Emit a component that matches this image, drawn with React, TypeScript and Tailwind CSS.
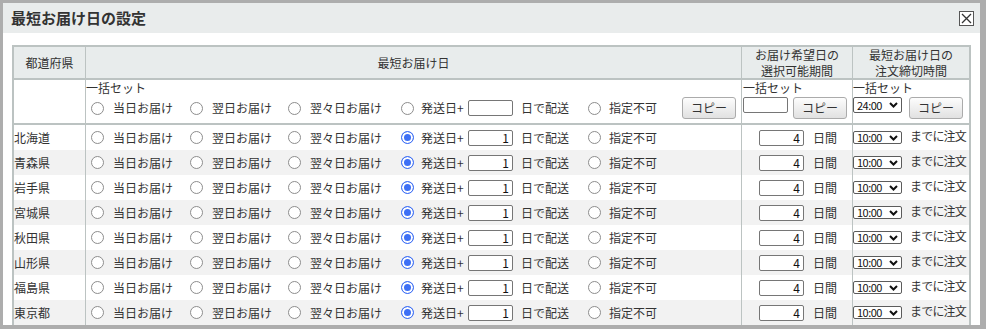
import React from "react";

const prefs = ["北海道", "青森県", "岩手県", "宮城県", "秋田県", "山形県", "福島県", "東京都"];

function Radio({ checked = false }: { checked?: boolean }) {
  return (
    <span
      className={`inline-block h-[13px] w-[13px] shrink-0 rounded-full border ${
        checked
          ? "border-[#3d6ff5] bg-[#3d6ff5] shadow-[inset_0_0_0_2px_white]"
          : "border-[#8d8d8d] bg-white"
      }`}
    />
  );
}

function TextBox({ value = "", className = "" }: { value?: string; className?: string }) {
  return (
    <input
      readOnly
      value={value}
      className={`h-[16px] w-[45px] shrink-0 rounded-[2px] border border-[#767676] bg-white px-[3px] text-right text-[12px] leading-[14px] text-[#111] outline-none ${className}`}
    />
  );
}

function FakeSelect({ value, tall = false }: { value: string; tall?: boolean }) {
  return (
    <div
      className={`flex w-[49px] shrink-0 items-center justify-between rounded-[2px] border border-[#5c5c5c] bg-white pl-[3px] pr-[3px] text-[11px] leading-none text-[#111] ${
        tall ? "h-[16px]" : "h-[13px]"
      }`}
    >
      <span className="tracking-[-0.5px]">{value}</span>
      <svg width="9" height="6" viewBox="0 0 9 6">
        <path d="M1 1 L4.5 4.5 L8 1" fill="none" stroke="#111" strokeWidth="2" />
      </svg>
    </div>
  );
}

function CopyButton() {
  return (
    <button className="h-[22px] w-[54px] shrink-0 rounded-[3px] border border-[#ababab] bg-linear-to-b from-[#fdfdfd] to-[#e1e1e1] text-[12px] leading-none text-[#333]">
      コピー
    </button>
  );
}

function Options({ bulk = false }: { bulk?: boolean }) {
  return (
    <div className={`flex pl-[5px] ${bulk ? "h-[22px] items-center" : "h-full items-center"}`}>
      <div className="flex w-[99px] items-center">
        <Radio />
        <span className="ml-[9px]">当日お届け</span>
      </div>
      <div className="flex w-[98px] items-center">
        <Radio />
        <span className="ml-[9px]">翌日お届け</span>
      </div>
      <div className="flex w-[113px] items-center">
        <Radio />
        <span className="ml-[9px]">翌々日お届け</span>
      </div>
      <div className="flex w-[187px] items-center">
        <Radio checked={!bulk} />
        <span className="ml-[7px] w-[47px]">発送日+</span>
        <TextBox value={bulk ? "" : "1"} />
        <span className="ml-[8px]">日で配送</span>
      </div>
      <div className="flex w-[94px] items-center">
        <Radio />
        <span className="ml-[8px]">指定不可</span>
      </div>
      {bulk && <CopyButton />}
    </div>
  );
}

export default function App() {
  return (
    <div
      className="h-[329px] w-[986px] overflow-hidden bg-[#adadad] pl-[3px] pt-[3px] text-[12px] text-[#333]"
      style={{ fontFamily: '"Noto Sans CJK JP", "Noto Sans", sans-serif' }}
    >
      <div className="h-[322px] w-[977px] overflow-hidden bg-white">
        <div className="flex h-[30px] items-center justify-between bg-[#e9ecec] pl-[8px] pr-[6px]">
          <span className="text-[15px] font-bold text-[#333]">最短お届け日の設定</span>
          <div className="flex h-[15px] w-[15px] items-center justify-center border border-[#555] bg-white">
            <svg width="11" height="11" viewBox="0 0 11 11">
              <path d="M1 1 L10 10 M10 1 L1 10" stroke="#333" strokeWidth="1.3" />
            </svg>
          </div>
        </div>

        <div className="ml-[9px] mt-[12px] w-[959px] border-2 border-[#bcc3c2]">
          {/* header */}
          <div className="flex h-[33px] border-b-2 border-[#bcc3c2] bg-[#e8ecec] leading-[16px]">
            <div className="flex w-[72px] items-center justify-center border-r border-[#bcc3c2]">都道府県</div>
            <div className="flex w-[656px] items-center justify-center border-r border-[#bcc3c2]">最短お届け日</div>
            <div className="flex w-[111px] flex-col items-center justify-center border-r border-[#bcc3c2]">
              <span>お届け希望日の</span>
              <span>選択可能期間</span>
            </div>
            <div className="flex w-[116px] flex-col items-center justify-center">
              <span>最短お届け日の</span>
              <span>注文締切時間</span>
            </div>
          </div>

          {/* bulk row */}
          <div className="flex h-[45px] border-b-2 border-[#bcc3c2] leading-[14px]">
            <div className="w-[72px] border-r border-[#bcc3c2]" />
            <div className="w-[656px] border-r border-[#bcc3c2]">
              <div className="h-[16px] leading-[16px]">一括セット</div>
              <div className="mt-[1px]">
                <Options bulk />
              </div>
            </div>
            <div className="w-[111px] border-r border-[#bcc3c2] pl-[1px]">
              <div className="h-[16px] leading-[16px]">一括セット</div>
              <div className="mt-[1px] flex items-start">
                <TextBox />
                <div className="ml-[5px]">
                  <CopyButton />
                </div>
              </div>
            </div>
            <div className="w-[116px]">
              <div className="h-[16px] leading-[16px]">一括セット</div>
              <div className="mt-[1px] flex items-start">
                <FakeSelect value="24:00" tall />
                <div className="ml-[7px]">
                  <CopyButton />
                </div>
              </div>
            </div>
          </div>

          {/* data rows */}
          {prefs.map((p, i) => (
            <div
              key={p}
              className={`flex h-[25px] leading-[14px] ${i % 2 === 1 ? "bg-[#f2f2f2]" : "bg-white"}`}
            >
              <div className="flex w-[72px] items-center border-r border-[#bcc3c2]">{p}</div>
              <div className="w-[656px] border-r border-[#bcc3c2]">
                <Options />
              </div>
              <div className="flex w-[111px] items-center border-r border-[#bcc3c2] pl-[17px]">
                <TextBox value="4" />
                <span className="ml-[9px]">日間</span>
              </div>
              <div className="flex w-[116px] items-center">
                <FakeSelect value="10:00" />
                <span className="ml-[8px] mt-[4px] shrink-0 self-start whitespace-nowrap tracking-[-0.8px]">
                  までに注文
                </span>
              </div>
            </div>
          ))}
        </div>
      </div>
    </div>
  );
}
